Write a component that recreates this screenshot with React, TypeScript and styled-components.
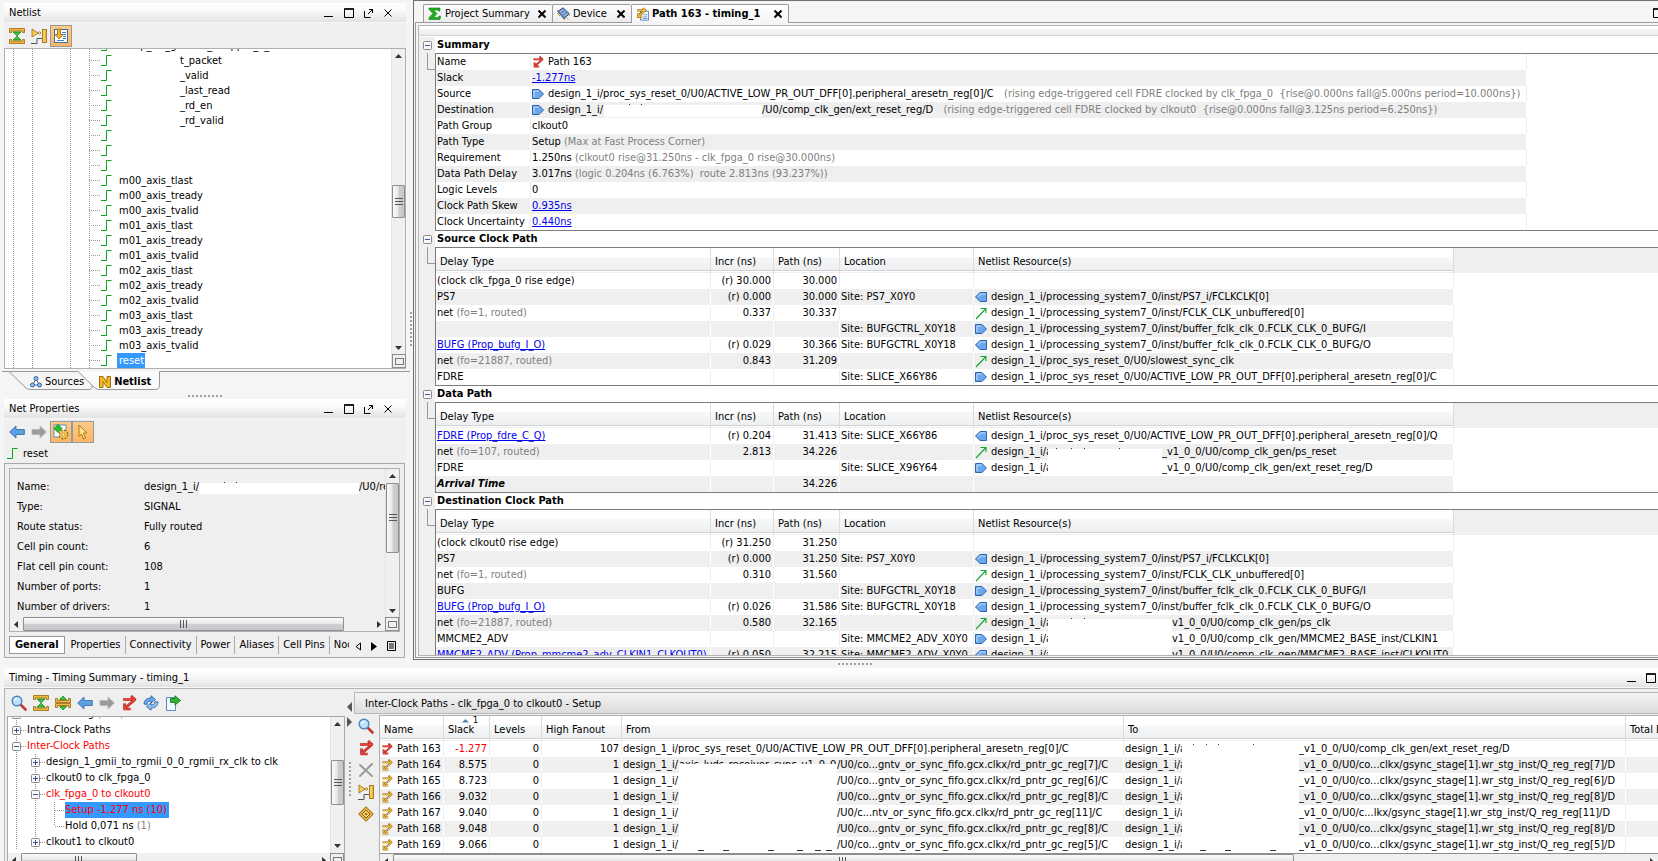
import React, { ReactNode } from "react";
import styled, { createGlobalStyle, css } from "styled-components";

const FONT = '"DejaVu Sans Condensed", "DejaVu Sans", sans-serif';

const Global = createGlobalStyle`
  * { box-sizing: border-box; }
  body { margin: 0; background: #f5f5f5; color: #000; font: 11px/16px ${FONT}; }
  button { font: inherit; color: inherit; padding: 0; border: 0; background: none; cursor: default; }
  a { color: #0000ee; text-decoration: underline; }
  svg { display: block; flex: none; }
`;

/* ---------- page frame ---------- */

const Page = styled.div`
  display: flex;
  flex-direction: column;
  height: 100vh;
  overflow: hidden;
  white-space: nowrap;
`;
const Workspace = styled.div`
  display: flex;
  flex: 1;
  min-height: 0;
`;
const Sidebar = styled.aside`
  display: flex;
  flex-direction: column;
  width: 413px;
  flex: none;
  padding: 3px 7px 2px 4px;
`;
const Dots = styled.div<{ $vertical?: boolean }>`
  flex: none;
  ${p =>
    p.$vertical
      ? css`width: 2px; height: 34px; background: repeating-linear-gradient(#a0a0a0 0 2px, transparent 2px 4px);`
      : css`width: 34px; height: 2px; background: repeating-linear-gradient(90deg, #a0a0a0 0 2px, transparent 2px 4px);`}
`;
const HSplitter = styled.div<{ $h: number; $left?: number }>`
  display: flex;
  align-items: center;
  justify-content: center;
  flex: none;
  height: ${p => p.$h}px;
  padding-left: ${p => p.$left ?? 0}px;
`;
const SideGrip = styled.div`
  position: absolute;
  left: 410px;
  top: 312px;
`;

/* ---------- panel parts ---------- */

const Panel = styled.section<{ $grow?: boolean }>`
  display: flex;
  flex-direction: column;
  ${p => (p.$grow ? "flex: 1; min-height: 0;" : "flex: none;")}
`;
const TitleBar = styled.header<{ $right: number }>`
  display: flex;
  align-items: center;
  flex: none;
  height: 20px;
  padding: 0 ${p => p.$right}px 0 5px;
  background: linear-gradient(#fff, #fafafa 40%, #e2e2e2);
  border-bottom: 1px solid #f8f8f8;
`;
const Title = styled.h2`
  flex: 1;
  margin: 0;
  font-size: 11px;
  font-weight: 400;
`;
const WinButtons = styled.div<{ $gap: number }>`
  display: flex;
  gap: ${p => p.$gap}px;
`;
const ToolBar = styled.div<{ $pad: string }>`
  display: flex;
  align-items: center;
  flex: none;
  height: 25px;
  padding: ${p => p.$pad};
  background: #efefef;
`;
const ToolButton = styled.button<{ $on?: boolean }>`
  display: flex;
  align-items: center;
  justify-content: center;
  width: 22px;
  height: 22px;
  flex: none;
  ${p => p.$on && "background: linear-gradient(#fdc98a, #fdb565); border: 1px solid #999;"}
`;

/* ---------- scroll bars ---------- */

const VBar = styled.div`
  display: flex;
  flex-direction: column;
  width: 14px;
  flex: none;
  background: #f0f0f0;
  border-left: 1px solid #e4e4e4;
`;
const HBar = styled.div`
  display: flex;
  flex: 1;
  min-width: 0;
  height: 14px;
  background: #f0f0f0;
`;
const ArrowButton = styled.button`
  display: flex;
  align-items: center;
  justify-content: center;
  width: 13px;
  height: 14px;
  flex: none;
`;
const Gap = styled.div<{ $n: number }>`
  flex: ${p => p.$n} 1 0;
`;
const Thumb = styled.div<{ $n: number; $v?: boolean }>`
  display: flex;
  align-items: center;
  justify-content: center;
  flex: ${p => p.$n} 1 0;
  border: 1px solid #8e8e8e;
  border-radius: 1px;
  background: linear-gradient(${p => (p.$v ? "90deg" : "180deg")}, #fafafa, #e9e9eb 45%, #cfcfd2 55%, #c6c7cb);
`;
const Corner = styled.button`
  display: flex;
  align-items: center;
  justify-content: center;
  width: 14px;
  height: 14px;
  flex: none;
  border: 1px solid #8c8c8c;
  background: #f0f0f0;
`;

const Tri = ({ d }: { d: "u" | "d" | "l" | "r" }) => {
  const p = { u: "M0 5L3.5 1L7 5z", d: "M0 2L3.5 6L7 2z", l: "M5 0L1 3.5L5 7z", r: "M2 0L6 3.5L2 7z" }[d];
  return <svg width="7" height="7"><path d={p} fill="#333" /></svg>;
};
const DividerTri = ({ left }: { left?: boolean }) => (
  <svg width="5" height="10"><path d={left ? "M5 0v10L0 5z" : "M0 0v10l5-5z"} fill="#555" /></svg>
);
const Grip = ({ v }: { v?: boolean }) => (
  <svg width="8" height="8">
    {[0, 3, 6].map(n => (v ? <path key={n} d={`M0 ${n + 0.5}h8`} stroke="#555" /> : <path key={n} d={`M${n + 0.5} 0v8`} stroke="#555" />))}
  </svg>
);
const SquareIcon = () => <svg width="9" height="7"><rect x="0.5" y="0.5" width="8" height="6" fill="none" stroke="#777" /></svg>;

const VScroll = ({ a, b, c, corner }: { a: number; b: number; c: number; corner?: boolean }) => (
  <VBar>
    <ArrowButton aria-label="Scroll up"><Tri d="u" /></ArrowButton>
    <Gap $n={a} />
    <Thumb $n={b} $v><Grip v /></Thumb>
    <Gap $n={c} />
    <ArrowButton aria-label="Scroll down"><Tri d="d" /></ArrowButton>
    {corner && <Corner aria-label="Overview"><SquareIcon /></Corner>}
  </VBar>
);
const HScroll = ({ b, c }: { b: number; c: number }) => (
  <HBar>
    <ArrowButton aria-label="Scroll left"><Tri d="l" /></ArrowButton>
    <Thumb $n={b}><Grip /></Thumb>
    <Gap $n={c} />
    <ArrowButton aria-label="Scroll right"><Tri d="r" /></ArrowButton>
  </HBar>
);

/* ---------- icons ---------- */

const Icon = ({ s = 16, children }: { s?: number; children: ReactNode }) => (
  <svg width={s} height={s} viewBox="0 0 16 16">{children}</svg>
);
const G = "#f0b83c";
const GD = "#9a6a12";
const CollapseIcon = () => (
  <Icon>
    <path d="M.5 .5h15v4h-2v-1.500h-11v1.500h-2zM.5 15.500h15v-4h-2v1.500h-11v-1.500h-2z" fill={G} stroke={GD} strokeWidth=".8" />
    <path d="M4 4h8L8 7.800zM4 12h8L8 8.200z" fill="#3fc63c" stroke="#137a13" strokeWidth=".7" />
  </Icon>
);
const ExpandIcon = () => (
  <Icon>
    <path d="M.5 3.500h2v2h11v-2h2v4H.5zM.5 12.500h2v-2h11v2h2v-4H.5z" fill={G} stroke={GD} strokeWidth=".8" />
    <path d="M4.500 4.500L8 1l3.500 3.500zM4.500 11.500L8 15l3.500-3.500z" fill="#3fc63c" stroke="#137a13" strokeWidth=".7" />
  </Icon>
);
const SchematicIcon = () => (
  <Icon>
    <path d="M0 15.500h6v-5h5" fill="none" stroke="#555" />
    <path d="M1 1l6 4-6 4z" fill="#f9cf55" stroke={GD} strokeWidth=".8" />
    <circle cx="8.500" cy="5" r="1.200" fill="#fff" stroke={GD} strokeWidth=".8" />
    <rect x="11.500" y="1.500" width="4" height="13" fill={G} stroke={GD} strokeWidth=".8" />
    <path d="M13 2.500v11" stroke="#fbe08e" />
  </Icon>
);
const ScrollToIcon = () => (
  <Icon>
    <rect x="1.500" y="1.500" width="13" height="13" fill="#fff" stroke="#3b6ea8" />
    <path d="M9 4.500h4M9 6.500h4M10 8.500h3M10 10.500h3M4 12.500h7" stroke="#4a7fba" />
    <path d="M4.500 1h3v5.500H10L6 11 2 6.500h2.500z" fill="#f2b52f" stroke={GD} strokeWidth=".8" />
  </Icon>
);
const BackIcon = () => <Icon><path d="M.7 8L7 2v3.500h8.300v5H7V14z" fill="#5d9fe3" stroke="#2e64a8" strokeWidth=".8" /></Icon>;
const ForwardIcon = () => <Icon><path d="M15.300 8L9 2v3.500H1v5h8V14z" fill="#9a9a9a" stroke="#b5b5b5" strokeWidth=".8" /></Icon>;
const GearIcon = () => (
  <Icon>
    <rect x="1" y="1" width="12" height="12" fill="#fff" stroke="#5c8bc4" />
    <circle cx="10.500" cy="10.500" r="4" fill="#f4c542" stroke={GD} strokeWidth="2" strokeDasharray="1.800 1.340" />
    <circle cx="10.500" cy="10.500" r="3.600" fill="#f6c945" />
    <circle cx="10.500" cy="10.500" r="1.500" fill="#fff" stroke={GD} strokeWidth=".7" />
    <path d="M5 .5L9 4.500 5 8.500 1 4.500z" fill="#28c028" stroke="#107010" strokeWidth=".8" />
  </Icon>
);
const CursorIcon = () => <Icon><path d="M4 1l8 8H8.500l2 5-2 1-2.200-5L4 12.500z" fill="#ffe08a" stroke="#b0780c" /></Icon>;
const ZoomIcon = () => (
  <Icon>
    <path d="M9.500 9.500l5 5" stroke="#c8372d" strokeWidth="2.600" strokeLinecap="round" />
    <circle cx="6" cy="6" r="4.800" fill="#bfe0f8" stroke="#4a86c5" strokeWidth="1.400" />
    <path d="M3.500 5.500a3 3 0 0 1 3-2.200" fill="none" stroke="#fff" strokeWidth="1.200" />
  </Icon>
);
const ZIG = "M2 4.500H13.500M10 1l4 3.500-4 3.500M13 5.500L4 13M3.500 8.500V14H9.500";
const PathIcon = ({ red, s }: { red?: boolean; s?: number }) => (
  <Icon s={s}>
    <path d={ZIG} fill="none" stroke={red ? "#a3241d" : "#966a12"} strokeWidth="2.600" strokeLinejoin="round" />
    <path d={ZIG} fill="none" stroke={red ? "#f04438" : "#f3bb38"} strokeWidth="1.300" />
  </Icon>
);
const RefreshIcon = () => (
  <Icon>
    <path d="M1 9c0-4 3-6 7-6V.7L12.500 4.500 8 8V6C5.500 6 4 7 4 9.500z" fill="#6aaae8" stroke="#235a9c" strokeWidth=".8" />
    <path d="M15 7c0 4-3 6-7 6v2.300L3.500 11.500 8 8v2c2.500 0 4-1 4-3.500z" fill="#8ec2f2" stroke="#235a9c" strokeWidth=".8" />
  </Icon>
);
const ExportIcon = () => (
  <Icon>
    <path d="M1.500 2.500h9v13h-9z" fill="#f4f9ff" stroke="#5c8bc4" />
    <path d="M5.500 3.500h4.500V.8l5.500 4.700L10 10V7.500H5.500z" fill="#2fb52f" stroke="#0f6e0f" strokeWidth=".8" />
  </Icon>
);
const CrossIcon = () => <Icon><path d="M2 3l12 11M14 2L2 14" stroke="#9a9a9a" strokeWidth="2" strokeLinecap="round" /></Icon>;
const DiamondIcon = () => (
  <Icon>
    <path d="M8 .7L15.300 8 8 15.300.7 8z" fill="#e9b13a" stroke="#8f6410" />
    <path d="M8 4l4 4-4 4-4-4z" fill="#f7d77a" stroke="#8f6410" />
    <path d="M8 6.500L9.500 8 8 9.500 6.500 8z" fill="#8f6410" />
  </Icon>
);
const NetIcon = () => <svg width="11" height="11"><path d="M0 10.500h5.500v-10h5" fill="none" stroke="#0aa51e" /></svg>;
const WireIcon = () => <svg width="12" height="13"><path d="M1 12L11 1.500M5.500 1.500H11V6" fill="none" stroke="#12a52a" strokeWidth="1.100" /></svg>;
const PinIcon = ({ left }: { left?: boolean }) => (
  <svg width="12" height="12" viewBox="0 0 12 12">
    <path
      d={left ? "M11.500 1.500v9H5L.5 6 5 1.500z" : "M.5 1.500v9H7L11.500 6 7 1.500z"}
      fill="#6aa8ee"
      stroke="#2f62b0"
    />
    <path d={left ? "M10.500 3H5.500L3 6" : "M2 9V3h4.500"} fill="none" stroke="#c4e0fb" />
  </svg>
);
const MinIcon = () => <svg width="10" height="10"><path d="M0 8.500h9" stroke="#000" /></svg>;
const MaxIcon = () => <svg width="10" height="10"><path d="M.5 1h9v8.500h-9z" fill="none" stroke="#000" /><path d="M0 1h10" stroke="#000" strokeWidth="1.500" /></svg>;
const FloatIcon = () => <svg width="10" height="10"><path d="M.5 3v6.500h6M4 6L8.500 1.500M5 1.500h3.500V5" fill="none" stroke="#000" /></svg>;
const CloseIcon = ({ w = 1 }: { w?: number }) => <svg width="8" height="8"><path d="M.5.5l7 7M7.500.5l-7 7" stroke="#000" strokeWidth={w} /></svg>;
const SourcesIcon = () => (
  <svg width="12" height="12">
    <path d="M6 3L2.500 9h7z" fill="none" stroke="#666" />
    {[[6, 2.5], [2.5, 9], [9.5, 9]].map(([x, y]) => <circle key={x} cx={x} cy={y} r="2" fill="#8cc0f4" stroke="#2f62a8" />)}
  </svg>
);
const LogoN = () => (
  <svg width="12" height="12">
    <path d="M.5.5h3.500l4 6v-6h3.500v11H8l-4-6v6H.5z" fill="#f5b921" stroke="#a06c08" />
  </svg>
);
const SigmaIcon = () => (
  <svg width="14" height="13">
    <path d="M1 1h11v3h-1.500l-.7-1H5.500L9 6.500 5.500 10.500h4.600l1-1.500h1.400L12 12.500H1v-1.700l4-4.300-4-4z" fill="#1fae1f" stroke="#0d7a0d" strokeWidth=".6" />
  </svg>
);
const ChipIcon = () => (
  <svg width="13" height="13">
    <path d="M0 6l3 3M1.500 4.500L0 3M8 13l-2-2M10 11l1.500 1.500M12 8l1 1" stroke="#c79a2a" />
    <path d="M.7 4.500L6 .8l6.300 6-5.300 5z" fill="#6c8cc4" stroke="#35507f" />
    <path d="M3 5l3.500-2.500M5 7l3.500-2.500M7 9l3.500-2.500" stroke="#b9cbe8" />
  </svg>
);
const PathDocIcon = () => (
  <svg width="13" height="14" viewBox="0 0 16 16">
    <path d="M5.500 4.500h10v11h-10z" fill="#fff" stroke="#3b6ea8" />
    <path d="M9 9h5M9 11.500h5M8 13.500h6" stroke="#4a7fba" />
    <path d="M1.500 3.500H10M8 1l3 2.500L8 6M9.500 4.500L3.500 11M3 7v4.500h4.500" fill="none" stroke="#8f6410" strokeWidth="3" />
    <path d="M1.500 3.500H10M8 1l3 2.500L8 6M9.500 4.500L3.500 11M3 7v4.500h4.500" fill="none" stroke="#f3bb38" strokeWidth="1.600" />
  </svg>
);
const ListIcon = () => <svg width="9" height="10"><path d="M.5.500h8v9h-8zM2 3h5M2 5h5M2 7h5" fill="none" stroke="#000" /></svg>;

const WinControls = () => (
  <WinButtons $gap={10}>
    <button aria-label="Minimize"><MinIcon /></button>
    <button aria-label="Maximize"><MaxIcon /></button>
    <button aria-label="Float"><FloatIcon /></button>
    <button aria-label="Close"><CloseIcon /></button>
  </WinButtons>
);

/* ---------- netlist tree ---------- */

const dotsV = "repeating-linear-gradient(#999 0 1px, transparent 1px 2px)";
const dotsH = "repeating-linear-gradient(90deg, #999 0 1px, transparent 1px 2px)";

const NetlistBox = styled.div`
  display: flex;
  flex: 1;
  min-height: 0;
  border: 1px solid #b0b0b0;
  background: #fff;
`;
const NetlistTree = styled.ul`
  display: flex;
  flex-direction: column;
  justify-content: flex-end;
  flex: 1;
  margin: 0;
  padding: 0 0 0 84px;
  overflow: hidden;
  list-style: none;
  background: ${dotsV} 8px 0 / 1px 100% no-repeat, ${dotsV} 27px 0 / 1px 100% no-repeat,
    ${dotsV} 65px 0 / 1px 100% no-repeat, ${dotsV} 84px 0 / 1px 100% no-repeat;
`;
const NetlistRow = styled.li`
  display: flex;
  align-items: center;
  flex: none;
  height: 15px;
  line-height: 15px;
  &::before { content: ""; width: 12px; height: 1px; background: ${dotsH}; }
`;
const NetLabel = styled.span<{ $indent?: boolean; $on?: boolean }>`
  margin-left: ${p => (p.$indent ? 66 : 5)}px;
  padding: 0 1px 0 2px;
  ${p => p.$on && "background: #3399ff; color: #fff;"}
`;

const NETS: [string, boolean][] = [
  ["comp_clk_generic_wrapper_0_0", false],
  ["t_packet", true], ["_valid", true], ["_last_read", true], ["_rd_en", true], ["_rd_valid", true],
  ["", true], ["", true], ["", true],
  ...["m00", "m01", "m02", "m03"].flatMap(m => ["tlast", "tready", "tvalid"].map(s => [`${m}_axis_${s}`, false] as [string, boolean])),
  ["reset", false],
];

const SlantTabs = styled.nav`
  position: relative;
  display: flex;
  align-items: center;
  flex: none;
  height: 22px;
  margin-top: 2px;
  padding: 0 0 1px 26px;
  gap: 15px;
`;
const SlantShape = styled.svg`
  position: absolute;
  left: -3px;
  top: 0;
`;
const SlantTab = styled.button<{ $on?: boolean }>`
  position: relative;
  display: flex;
  align-items: center;
  gap: 3px;
  font-weight: ${p => (p.$on ? 700 : 400)};
`;

/* ---------- net properties ---------- */

const NetHeading = styled.div`
  display: flex;
  align-items: center;
  flex: none;
  height: 19px;
  gap: 5px;
  padding-left: 3px;
  background: #efefef;
`;
const PropFrame = styled.div`
  display: flex;
  flex-direction: column;
  width: 401px;
  height: 195px;
  padding: 4px;
  border: 1px solid #a8a8a8;
  background: #efefef;
`;
const PropBox = styled.div`
  display: flex;
  flex-direction: column;
  height: 165px;
  border: 1px solid #b0b0b0;
`;
const PropScrollArea = styled.div`
  display: flex;
  flex: 1;
  min-height: 0;
`;
const PropTable = styled.table`
  flex: 1;
  display: block;
  overflow: hidden;
  border-collapse: collapse;
  padding-top: 8px;
  th { width: 134px; min-width: 134px; padding: 0 0 0 7px; height: 20px; font-weight: 400; text-align: left; }
  td { padding: 0; height: 20px; }
`;
const PropTabs = styled.nav`
  display: flex;
  align-items: center;
  height: 20px;
  margin: 4px 2px 0 0;
`;
const PropTabStrip = styled.div`
  display: flex;
  flex: 1;
  min-width: 0;
  overflow: hidden;
`;
const PropTab = styled.button<{ $on?: boolean }>`
  flex: none;
  height: 18px;
  padding: 0 4px;
  ${p =>
    p.$on
      ? "font-weight: 700; background: #fff; border: 1px solid #999; padding: 0 5px; margin-right: 2px;"
      : "border-right: 1px solid #aaa;"}
`;
const TabArrows = styled.div`
  display: flex;
  align-items: center;
  gap: 10px;
  padding: 2px 2px 0 6px;
`;

/* ---------- names with blanked parts ---------- */

const NameLine = styled.span`
  display: inline-flex;
  align-items: center;
  height: 16px;
  vertical-align: top;
`;
const Prefix = styled.span<{ $w: number }>`
  width: ${p => p.$w}px;
  overflow: hidden;
  flex: none;
`;
const Blank = styled.span<{ $w: number; $top: number; $h: number }>`
  align-self: flex-start;
  position: relative;
  flex: none;
  width: ${p => p.$w}px;
  height: 16px;
  line-height: 16px;
  overflow: hidden;
  &::after {
    content: "";
    position: absolute;
    inset: ${p => p.$top}px 0 auto 0;
    height: ${p => p.$h}px;
    background: #fff;
  }
`;
const Specks = styled.svg`
  position: absolute;
  left: 0;
  top: 0;
  z-index: 1;
`;
type BlankSpec = { w: number; top?: number; h?: number; specks?: string; under?: string };
const Masked = ({ pre, preW = 56, blank, post }: { pre: string; preW?: number; blank: BlankSpec; post: string }) => (
  <NameLine>
    <Prefix $w={preW}>{pre}</Prefix>
    <Blank $w={blank.w} $top={blank.top ?? 0} $h={blank.h ?? 16}>
      {blank.under}
      {blank.specks && <Specks width={blank.w} height="16"><path d={blank.specks} stroke="#333" /></Specks>}
    </Blank>
    {post}
  </NameLine>
);

/* ---------- editor ---------- */

const Editor = styled.main`
  display: flex;
  flex-direction: column;
  flex: 1;
  min-width: 0;
  padding: 3px 0 1px 1px;
  border: solid #6f6f6f;
  border-width: 1px 0 1px 1px;
`;
const EditorTabs = styled.div`
  display: flex;
  align-items: flex-end;
  flex: none;
  height: 18px;
  padding-left: 8px;
  position: relative;
  z-index: 1;
`;
const EditorTab = styled.div<{ $on?: boolean; $w: number }>`
  display: flex;
  align-items: center;
  gap: 3px;
  width: ${p => p.$w}px;
  height: ${p => (p.$on ? 19 : 18)}px;
  margin: 0 0 ${p => (p.$on ? -1 : 0)}px;
  padding: 0 6px 0 4px;
  border: 1px solid #9c9c9c;
  border-bottom: 0;
  border-right-width: ${p => (p.$on ? 1 : 0)}px;
  border-radius: 2px 2px 0 0;
  background: ${p => (p.$on ? "linear-gradient(#fff, #f5f5f5)" : "linear-gradient(#fdfdfd, #ececec)")};
  font-weight: ${p => (p.$on ? 700 : 400)};
  button:last-child { margin-left: auto; }
`;
const TabMax = styled.button`
  margin: 0 -5px 4px auto;
`;
const EditorOuter = styled.div`
  display: flex;
  flex: 1;
  min-height: 0;
  padding: 2px 0 1px 2px;
  border: solid #9a9a9a;
  border-width: 1px 0 1px 1px;
`;
const EditorBody = styled.div`
  flex: 1;
  min-width: 0;
  overflow: hidden;
  border: solid #b4b4b4;
  border-width: 1px 0 1px 1px;
  background: linear-gradient(90deg, #efefef 16px, #fff 16px);
`;
const Strip = styled.div`
  height: 11px;
  background: linear-gradient(#fff 0 2px, #f6f7f8 3px, #ebecee 9px, #d3d5d8 9px 10px, #fff 10px);
`;
const Section = styled.section`
  position: relative;
  padding-left: 16px;
`;
const SectionTitle = styled.h3`
  display: flex;
  align-items: center;
  height: 16px;
  margin: 0 0 0 -12px;
  gap: 5px;
  font-size: 11px;
  font-weight: 700;
`;
const Bracket = styled.div`
  position: absolute;
  left: 8px;
  top: 16px;
  width: 8px;
  height: 17px;
  border: solid #999;
  border-width: 0 0 1px 1px;
`;
const Toggle = styled.button`
  display: flex;
  width: 9px;
  height: 9px;
  flex: none;
`;
const ToggleIcon = ({ plus }: { plus?: boolean }) => (
  <svg width="9" height="9">
    <rect x=".5" y=".5" width="8" height="8" rx="1" fill="#f8f8f8" stroke="#888" />
    <path d={plus ? "M2 4.500h5M4.500 2v5" : "M2 4.500h5"} stroke="#35549b" />
  </svg>
);
const TableBox = styled.div`
  border: solid #7c7c7c;
  border-width: 1px 0 1px 1px;
  background: #fff;
`;
const HeadFill = styled.div`
  background: linear-gradient(#efefef, #efefef) 0 0 / 100% 25px no-repeat;
`;

const Grid = styled.table`
  table-layout: fixed;
  border-collapse: separate;
  border-spacing: 0;
  width: 0;
  td, th { overflow: hidden; padding: 0 1px; text-align: left; font-weight: 400; }
  td { height: 16px; line-height: 16px; border-right: 1px solid #efefef; }
  tr:nth-child(even) > td { background: #efefef; border-right-color: #fff; }
`;
const HeadCell = styled.th`
  position: relative;
  height: 25px;
  line-height: 16px;
  && { padding: 2px 0 0 4px; }
  border-right: 1px solid #dcdcdc;
  background: linear-gradient(#fff 0 9px, #f6f8f9 9px, #edeff1 22px, #d0d2d5 22px 23px, #fff 23px 24px, #efefef 24px);
`;
const SortMark = styled.span`
  position: absolute;
  display: flex;
  align-items: center;
  gap: 4px;
  top: 0;
  left: 18px;
  font-size: 9px;
  line-height: 9px;
`;
const Num = styled.td<{ $red?: boolean }>`
  && { text-align: right; padding-right: 2px; ${p => p.$red && "color: #f00;"} }
`;
const WithIcon = styled.span`
  display: flex;
  align-items: center;
  height: 16px;
  gap: 4px;
`;
const Note = styled.span`
  color: #808080;
`;
const Pre = styled(Note)`
  white-space: pre;
`;

type Kind = "out" | "in" | "net";
const ResIcon = ({ k }: { k: Kind }) => (k === "net" ? <WireIcon /> : <PinIcon left={k === "out"} />);
type PathRow = { type?: ReactNode; incr?: string; path?: string; loc?: string; kind?: Kind; res?: ReactNode };

const PathTable = ({ title, rows }: { title: string; rows: PathRow[] }) => (
  <Section>
    <SectionTitle><Toggle aria-label={`Collapse ${title}`}><ToggleIcon /></Toggle>{title}</SectionTitle>
    <Bracket />
    <TableBox>
      <HeadFill>
        <Grid>
          <colgroup>{[275, 63, 66, 134, 480].map((w, i) => <col key={i} style={{ width: w }} />)}</colgroup>
          <thead>
            <tr>
              {["Delay Type", "Incr (ns)", "Path (ns)", "Location", "Netlist Resource(s)"].map(h => <HeadCell key={h}>{h}</HeadCell>)}
            </tr>
          </thead>
          <tbody>
            {rows.map((r, i) => (
              <tr key={i}>
                <td>{r.type}</td>
                <Num>{r.incr}</Num>
                <Num>{r.path}</Num>
                <td>{r.loc}</td>
                <td>{r.kind && <WithIcon><ResIcon k={r.kind} />{r.res}</WithIcon>}</td>
              </tr>
            ))}
          </tbody>
        </Grid>
      </HeadFill>
    </TableBox>
  </Section>
);

const P7 = "design_1_i/processing_system7_0/inst/";
const REG = "design_1_i/proc_sys_reset_0/U0/ACTIVE_LOW_PR_OUT_DFF[0].peripheral_aresetn_reg[0]/";
const net = (n: string) => <>net <Note>(fo={n}, routed)</Note></>;
const link = (t: string) => <a href="#cell">{t}</a>;

const SOURCE_ROWS: PathRow[] = [
  { type: "(clock clk_fpga_0 rise edge)", incr: "(r) 30.000", path: "30.000" },
  { type: "PS7", incr: "(r) 0.000", path: "30.000", loc: "Site: PS7_X0Y0", kind: "out", res: P7 + "PS7_i/FCLKCLK[0]" },
  { type: net("1"), incr: "0.337", path: "30.337", kind: "net", res: P7 + "FCLK_CLK_unbuffered[0]" },
  { loc: "Site: BUFGCTRL_X0Y18", kind: "in", res: P7 + "buffer_fclk_clk_0.FCLK_CLK_0_BUFG/I" },
  { type: link("BUFG (Prop_bufg_I_O)"), incr: "(r) 0.029", path: "30.366", loc: "Site: BUFGCTRL_X0Y18", kind: "out", res: P7 + "buffer_fclk_clk_0.FCLK_CLK_0_BUFG/O" },
  { type: net("21887"), incr: "0.843", path: "31.209", kind: "net", res: "design_1_i/proc_sys_reset_0/U0/slowest_sync_clk" },
  { type: "FDRE", loc: "Site: SLICE_X66Y86", kind: "in", res: REG + "C" },
];
const DATA_ROWS: PathRow[] = [
  { type: link("FDRE (Prop_fdre_C_Q)"), incr: "(r) 0.204", path: "31.413", loc: "Site: SLICE_X66Y86", kind: "out", res: REG + "Q" },
  {
    type: net("107"), incr: "2.813", path: "34.226", kind: "net",
    res: <Masked pre="design_1_i/a" preW={57} blank={{ w: 114, top: 5, h: 11, specks: "M8 4.500h1M23 4.500h1M36 4.500h1M71 4.500h1" }} post="_v1_0_0/U0/comp_clk_gen/ps_reset" />,
  },
  { type: "FDRE", loc: "Site: SLICE_X96Y64", kind: "in", res: <Masked pre="design_1_i/a" preW={57} blank={{ w: 114 }} post="_v1_0_0/U0/comp_clk_gen/ext_reset_reg/D" /> },
  { type: <b><i>Arrival Time</i></b>, path: "34.226" },
];
const DEST_ROWS: PathRow[] = [
  { type: "(clock clkout0 rise edge)", incr: "(r) 31.250", path: "31.250" },
  { type: "PS7", incr: "(r) 0.000", path: "31.250", loc: "Site: PS7_X0Y0", kind: "out", res: P7 + "PS7_i/FCLKCLK[0]" },
  { type: net("1"), incr: "0.310", path: "31.560", kind: "net", res: P7 + "FCLK_CLK_unbuffered[0]" },
  { type: "BUFG", loc: "Site: BUFGCTRL_X0Y18", kind: "in", res: P7 + "buffer_fclk_clk_0.FCLK_CLK_0_BUFG/I" },
  { type: link("BUFG (Prop_bufg_I_O)"), incr: "(r) 0.026", path: "31.586", loc: "Site: BUFGCTRL_X0Y18", kind: "out", res: P7 + "buffer_fclk_clk_0.FCLK_CLK_0_BUFG/O" },
  {
    type: net("21887"), incr: "0.580", path: "32.165", kind: "net",
    res: <Masked pre="design_1_i/a" preW={57} blank={{ w: 124, top: 4, h: 12, specks: "M23 3.500h1M36 3.500h1" }} post="v1_0_0/U0/comp_clk_gen/ps_clk" />,
  },
  { type: "MMCME2_ADV", loc: "Site: MMCME2_ADV_X0Y0", kind: "in", res: <Masked pre="design_1_i/a" preW={57} blank={{ w: 124 }} post="v1_0_0/U0/comp_clk_gen/MMCME2_BASE_inst/CLKIN1" /> },
  {
    type: link("MMCME2_ADV (Prop_mmcme2_adv_CLKIN1_CLKOUT0)"), incr: "(r) 0.050", path: "32.215", loc: "Site: MMCME2_ADV_X0Y0", kind: "out",
    res: <Masked pre="design_1_i/a" preW={57} blank={{ w: 124 }} post="v1_0_0/U0/comp_clk_gen/MMCME2_BASE_inst/CLKOUT0" />,
  },
];
const SUMMARY: [string, ReactNode][] = [
  ["Name", <WithIcon><PathIcon red s={12} />Path 163</WithIcon>],
  ["Slack", link("-1.277ns")],
  ["Source", <WithIcon><PinIcon />{REG}C<Pre>{"  (rising edge-triggered cell FDRE clocked by clk_fpga_0  {rise@0.000ns fall@5.000ns period=10.000ns})"}</Pre></WithIcon>],
  ["Destination", (
    <WithIcon>
      <PinIcon />
      <Masked pre="design_1_i/" blank={{ w: 158, top: 3, h: 12, specks: "M25 2.500h1M37 2.500h1" }} post="/U0/comp_clk_gen/ext_reset_reg/D" />
      <Pre>{"  (rising edge-triggered cell FDRE clocked by clkout0  {rise@0.000ns fall@3.125ns period=6.250ns})"}</Pre>
    </WithIcon>
  )],
  ["Path Group", "clkout0"],
  ["Path Type", <>Setup <Note>(Max at Fast Process Corner)</Note></>],
  ["Requirement", <>1.250ns <Note>(clkout0 rise@31.250ns - clk_fpga_0 rise@30.000ns)</Note></>],
  ["Data Path Delay", <>3.017ns <Pre>{"(logic 0.204ns (6.763%)  route 2.813ns (93.237%))"}</Pre></>],
  ["Logic Levels", "0"],
  ["Clock Path Skew", link("0.935ns")],
  ["Clock Uncertainty", link("0.440ns")],
];

/* ---------- timing panel ---------- */

const Timing = styled.section`
  display: flex;
  flex-direction: column;
  flex: none;
  height: 193px;
  padding-left: 4px;
`;
const TimingBody = styled.div`
  display: flex;
  flex: 1;
  min-height: 0;
  border: solid #b4b4b4;
  border-width: 1px 0 0 1px;
  padding: 2px 0 0 2px;
  background: #efefef;
`;
const TimingLeft = styled.div`
  display: flex;
  flex-direction: column;
  width: 338px;
  flex: none;
`;
const TimingTreeBox = styled.div`
  display: flex;
  flex-direction: column;
  flex: 1;
  min-height: 0;
  border: solid #a8a8a8;
  border-width: 1px 1px 0;
  background: #fff;
`;
const TimingTreeArea = styled.div`
  display: flex;
  height: 136px;
  flex: none;
`;
const TimingTree = styled.ul`
  display: flex;
  flex-direction: column;
  justify-content: flex-end;
  flex: 1;
  margin: 0;
  padding: 0 0 3px;
  overflow: hidden;
  list-style: none;
`;
const TimingRow = styled.li<{ $red?: boolean }>`
  display: flex;
  flex: none;
  height: 16px;
  ${p => p.$red && "color: #f00;"}
`;
const Guide = styled.span<{ $v?: "full" | "half" | "none"; $h?: boolean }>`
  display: flex;
  align-items: center;
  width: 19px;
  padding-left: 4px;
  flex: none;
  background: ${p => (p.$v === "none" ? "none" : `${dotsV} 8px 0 / 1px ${p.$v === "half" ? 50 : 100}% no-repeat`)}${p =>
    p.$h ? `, ${dotsH} 9px 8px / 10px 1px no-repeat` : ""};
`;
const TreeText = styled.span<{ $on?: boolean }>`
  ${p => p.$on && "background: #3399ff; padding-right: 2px;"}
`;
const Divider = styled.div`
  display: flex;
  flex-direction: column;
  align-items: center;
  width: 9px;
  flex: none;
  padding-top: 11px;
  gap: 5px;
`;
const DividerGrip = styled.div`
  padding-top: 30px;
`;
const TimingRight = styled.div`
  display: flex;
  flex-direction: column;
  flex: 1;
  min-width: 0;
`;
const PathsHeader = styled.div`
  height: 22px;
  flex: none;
  margin-top: 1px;
  padding-left: 10px;
  line-height: 22px;
  border: solid #bdb6bd;
  border-width: 1px 0 1px 1px;
  background: linear-gradient(#f4f4f4, #dcdcde);
`;
const PathsBody = styled.div`
  display: flex;
  flex: 1;
  min-height: 0;
  padding-top: 1px;
`;
const SideTools = styled.div`
  display: flex;
  flex-direction: column;
  width: 25px;
  flex: none;
  padding-left: 1px;
`;
const PathsTableBox = styled.div`
  display: flex;
  flex-direction: column;
  flex: 1;
  min-width: 0;
  overflow: hidden;
  border: solid #b0b0b0;
  border-width: 1px 0 0 1px;
  background: #fff;
`;
const PathsScroll = styled.div`
  height: 138px;
  overflow: hidden;
  flex: none;
  border-bottom: 1px solid #8e8e8e;
`;
const BarRow = styled.div`
  display: flex;
  background: #f0f0f0;
`;

type TreeLine = { levels: ("full" | "half" | "none")[]; box?: "+" | "-"; text: ReactNode; red?: boolean; on?: boolean };
const TREE: TreeLine[] = [
  { levels: ["full"], box: "+", text: <>Check Timing <Note>(192)</Note></> },
  { levels: ["full"], box: "+", text: "Intra-Clock Paths" },
  { levels: ["full"], box: "-", text: "Inter-Clock Paths", red: true },
  { levels: ["full", "full"], box: "+", text: "design_1_gmii_to_rgmii_0_0_rgmii_rx_clk to clk" },
  { levels: ["full", "full"], box: "+", text: "clkout0 to clk_fpga_0" },
  { levels: ["full", "full"], box: "-", text: "clk_fpga_0 to clkout0", red: true },
  { levels: ["full", "full", "full"], text: "Setup -1,277 ns (10)", red: true, on: true },
  { levels: ["full", "full", "half"], text: <>Hold 0,071 ns <Note>(1)</Note></> },
  { levels: ["full", "full"], box: "+", text: "clkout1 to clkout0" },
];

const fromTail = (n: number) => (n === 11 ? "/U0/c...ntv_or_sync_fifo.gcx.clkx/rd_pntr_gc_reg[11]/C" : `/U0/co...gntv_or_sync_fifo.gcx.clkx/rd_pntr_gc_reg[${n}]/C`);
const toTail = (n: number) => (n === 11 ? "_v1_0_0/U0/c...lkx/gsync_stage[1].wr_stg_inst/Q_reg_reg[11]/D" : `_v1_0_0/U0/co...clkx/gsync_stage[1].wr_stg_inst/Q_reg_reg[${n}]/D`);
const PATHS: [number, string, number][] = [
  [164, "8.575", 7], [165, "8.723", 6], [166, "9.032", 8], [167, "9.040", 11], [168, "9.048", 8], [169, "9.066", 5],
];
const fromBlank = (id: number): BlankSpec =>
  id === 164
    ? { w: 158, top: 7, h: 9, under: "axis_lvds_receiver_sync_v1_0_0" }
    : { w: 158, specks: id === 169 ? "M19 13.500h6M44 13.500h6M89 13.500h6M118 13.500h6M136 13.500h6M147 13.500h6" : undefined };

const COLS: [string, number][] = [["Name", 64], ["Slack", 46], ["Levels", 52], ["High Fanout", 80], ["From", 502], ["To", 502], ["Total Delay", 80]];

export default function App() {
  return (
    <Page>
      <Global />
      <Workspace>
        <Sidebar>
          <Panel $grow>
            <TitleBar $right={14}><Title>Netlist</Title><WinControls /></TitleBar>
            <ToolBar $pad="0 0 0 2px">
              <ToolButton aria-label="Collapse all"><CollapseIcon /></ToolButton>
              <ToolButton aria-label="Schematic"><SchematicIcon /></ToolButton>
              <ToolButton $on aria-label="Scroll to selected"><ScrollToIcon /></ToolButton>
            </ToolBar>
            <NetlistBox>
              <NetlistTree>
                {NETS.map(([t, indent], i) => (
                  <NetlistRow key={i}>
                    <NetIcon />
                    <NetLabel $indent={indent} $on={t === "reset"}>{t}</NetLabel>
                  </NetlistRow>
                ))}
              </NetlistTree>
              <VScroll a={119} b={31} c={119} corner />
            </NetlistBox>
            <SlantTabs>
              <SlantShape width="409" height="22">
                <path d="M8 .5L25 17Q27 18.500 30 18.500H89Q92 17 91 14" fill="none" stroke="#999" />
                <path d="M77 .5L94 17Q96 18.500 99 18.500H154Q158.500 18.500 158.500 14.500V.5z" fill="#fbfbfb" />
                <path d="M77 .5L94 17Q96 18.500 99 18.500H154Q158.500 18.500 158.500 14.500V.5M1 .5H77M158.500 .5H409" fill="none" stroke="#999" />
              </SlantShape>
              <SlantTab><SourcesIcon />Sources</SlantTab>
              <SlantTab $on><LogoN />Netlist</SlantTab>
            </SlantTabs>
          </Panel>
          <HSplitter $h={6}><Dots /></HSplitter>
          <Panel>
            <TitleBar $right={14}><Title>Net Properties</Title><WinControls /></TitleBar>
            <ToolBar $pad="0 0 0 2px">
              <ToolButton aria-label="Back"><BackIcon /></ToolButton>
              <ToolButton aria-label="Forward"><ForwardIcon /></ToolButton>
              <ToolButton $on aria-label="Settings"><GearIcon /></ToolButton>
              <ToolButton $on aria-label="Select"><CursorIcon /></ToolButton>
            </ToolBar>
            <NetHeading><NetIcon />reset</NetHeading>
            <PropFrame>
              <PropBox>
                <PropScrollArea>
                  <PropTable>
                    <tbody>
                      <tr><th>Name:</th><td><Masked pre="design_1_i/" preW={55} blank={{ w: 160, top: 4, h: 11, specks: "M25 3.500h1M37 3.500h1" }} post="/U0/re" /></td></tr>
                      {[["Type:", "SIGNAL"], ["Route status:", "Fully routed"], ["Cell pin count:", "6"], ["Flat cell pin count:", "108"], ["Number of ports:", "1"], ["Number of drivers:", "1"]].map(([k, v]) => (
                        <tr key={k}><th>{k}</th><td>{v}</td></tr>
                      ))}
                    </tbody>
                  </PropTable>
                  <VScroll a={0} b={70} c={51} />
                </PropScrollArea>
                <BarRow><HScroll b={319} c={28} /><Corner aria-label="Overview"><SquareIcon /></Corner></BarRow>
              </PropBox>
              <PropTabs>
                <PropTabStrip>
                  <PropTab $on>General</PropTab>
                  {["Properties", "Connectivity", "Power", "Aliases", "Cell Pins", "Nodes"].map(t => <PropTab key={t}>{t}</PropTab>)}
                </PropTabStrip>
                <TabArrows>
                  <button aria-label="Previous tab"><svg width="6" height="9"><path d="M5.500 1v7L1 4.500z" fill="none" stroke="#000" /></svg></button>
                  <button aria-label="Next tab"><svg width="6" height="9"><path d="M0 0v9l6-4.500z" /></svg></button>
                  <button aria-label="Tab list"><ListIcon /></button>
                </TabArrows>
              </PropTabs>
            </PropFrame>
          </Panel>
        </Sidebar>
        <SideGrip><Dots $vertical /></SideGrip>

        <Editor>
          <EditorTabs>
            <EditorTab $w={129}><SigmaIcon /><button>Project Summary</button><button aria-label="Close tab"><CloseIcon w={2} /></button></EditorTab>
            <EditorTab $w={79}><ChipIcon /><button>Device</button><button aria-label="Close tab"><CloseIcon w={2} /></button></EditorTab>
            <EditorTab $on $w={158}><PathDocIcon /><button>Path 163 - timing_1</button><button aria-label="Close tab"><CloseIcon w={2} /></button></EditorTab>
            <TabMax aria-label="Maximize"><MaxIcon /></TabMax>
          </EditorTabs>
          <EditorOuter>
            <EditorBody>
              <Strip />
              <Section>
                <SectionTitle><Toggle aria-label="Collapse Summary"><ToggleIcon /></Toggle>Summary</SectionTitle>
                <Bracket />
                <TableBox>
                  <Grid>
                    <colgroup><col style={{ width: 95 }} /><col style={{ width: 996 }} /></colgroup>
                    <tbody>
                      {SUMMARY.map(([k, v]) => <tr key={k}><td>{k}</td><td>{v}</td></tr>)}
                    </tbody>
                  </Grid>
                </TableBox>
              </Section>
              <PathTable title="Source Clock Path" rows={SOURCE_ROWS} />
              <PathTable title="Data Path" rows={DATA_ROWS} />
              <PathTable title="Destination Clock Path" rows={DEST_ROWS} />
            </EditorBody>
          </EditorOuter>
        </Editor>
      </Workspace>

      <HSplitter $h={8} $left={52}><Dots /></HSplitter>

      <Timing>
        <TitleBar $right={2}>
          <Title>Timing - Timing Summary - timing_1</Title>
          <WinButtons $gap={9}>
            <button aria-label="Minimize"><MinIcon /></button>
            <button aria-label="Maximize"><MaxIcon /></button>
          </WinButtons>
        </TitleBar>
        <TimingBody>
          <TimingLeft>
            <ToolBar $pad="0 0 2px 1px">
              <ToolButton aria-label="Find"><ZoomIcon /></ToolButton>
              <ToolButton aria-label="Collapse all"><CollapseIcon /></ToolButton>
              <ToolButton aria-label="Expand all"><ExpandIcon /></ToolButton>
              <ToolButton aria-label="Back"><BackIcon /></ToolButton>
              <ToolButton aria-label="Forward"><ForwardIcon /></ToolButton>
              <ToolButton aria-label="Path report"><PathIcon red /></ToolButton>
              <ToolButton aria-label="Refresh"><RefreshIcon /></ToolButton>
              <ToolButton aria-label="Export"><ExportIcon /></ToolButton>
            </ToolBar>
            <TimingTreeBox>
              <TimingTreeArea>
                <TimingTree>
                  {TREE.map((l, i) => (
                    <TimingRow key={i} $red={l.red}>
                      {l.levels.map((v, n) => (
                        <Guide key={n} $v={v} $h={n === l.levels.length - 1}>
                          {l.box && n === l.levels.length - 1 && <Toggle aria-label="Toggle branch"><ToggleIcon plus={l.box === "+"} /></Toggle>}
                        </Guide>
                      ))}
                      <TreeText $on={l.on}>{l.text}</TreeText>
                    </TimingRow>
                  ))}
                </TimingTree>
                <VScroll a={30} b={44} c={35} />
              </TimingTreeArea>
              <BarRow><HScroll b={114} c={180} /><Corner aria-label="Overview"><SquareIcon /></Corner></BarRow>
            </TimingTreeBox>
          </TimingLeft>
          <Divider>
            <DividerTri left />
            <DividerTri />
            <DividerGrip><Dots $vertical /></DividerGrip>
          </Divider>
          <TimingRight>
            <PathsHeader>Inter-Clock Paths - clk_fpga_0 to clkout0 - Setup</PathsHeader>
            <PathsBody>
              <SideTools>
                <ToolButton aria-label="Find"><ZoomIcon /></ToolButton>
                <ToolButton aria-label="Path report"><PathIcon red /></ToolButton>
                <ToolButton aria-label="Remove"><CrossIcon /></ToolButton>
                <ToolButton aria-label="Schematic"><SchematicIcon /></ToolButton>
                <ToolButton aria-label="Mark"><DiamondIcon /></ToolButton>
              </SideTools>
              <PathsTableBox>
                <PathsScroll>
                  <Grid>
                    <colgroup>{COLS.map(([n, w]) => <col key={n} style={{ width: w }} />)}</colgroup>
                    <thead>
                      <tr>
                        {COLS.map(([n]) => (
                          <HeadCell key={n}>
                            {n}
                            {n === "Slack" && <SortMark><svg width="7" height="5"><path d="M0 4.500L3.500 1 7 4.500z" fill="#4d86a8" /></svg>1</SortMark>}
                          </HeadCell>
                        ))}
                      </tr>
                    </thead>
                    <tbody>
                      <tr>
                        <td><WithIcon><PathIcon red s={12} />Path 163</WithIcon></td>
                        <Num $red>-1.277</Num><Num>0</Num><Num>107</Num>
                        <td>{REG}C</td>
                        <td><Masked pre="design_1_i/a" preW={57} blank={{ w: 117, top: 4, h: 12, specks: "M11 3.500h1M24 3.500h1M36 3.500h1M71 3.500h1" }} post="_v1_0_0/U0/comp_clk_gen/ext_reset_reg/D" /></td>
                        <td />
                      </tr>
                      {PATHS.map(([id, slack, n]) => (
                        <tr key={id}>
                          <td><WithIcon><PathIcon s={12} />Path {id}</WithIcon></td>
                          <Num>{slack}</Num><Num>0</Num><Num>1</Num>
                          <td><Masked pre="design_1_i/" blank={fromBlank(id)} post={fromTail(n)} /></td>
                          <td><Masked pre="design_1_i/a" preW={57} blank={{ w: 117, specks: id === 169 ? "M18 13.500h6M43 13.500h6M88 13.500h6" : undefined }} post={toTail(n)} /></td>
                          <td />
                        </tr>
                      ))}
                      <tr>{COLS.map(([n]) => <td key={n} />)}</tr>
                    </tbody>
                  </Grid>
                </PathsScroll>
                <BarRow><HScroll b={896} c={350} /></BarRow>
              </PathsTableBox>
            </PathsBody>
          </TimingRight>
        </TimingBody>
      </Timing>
    </Page>
  );
}
